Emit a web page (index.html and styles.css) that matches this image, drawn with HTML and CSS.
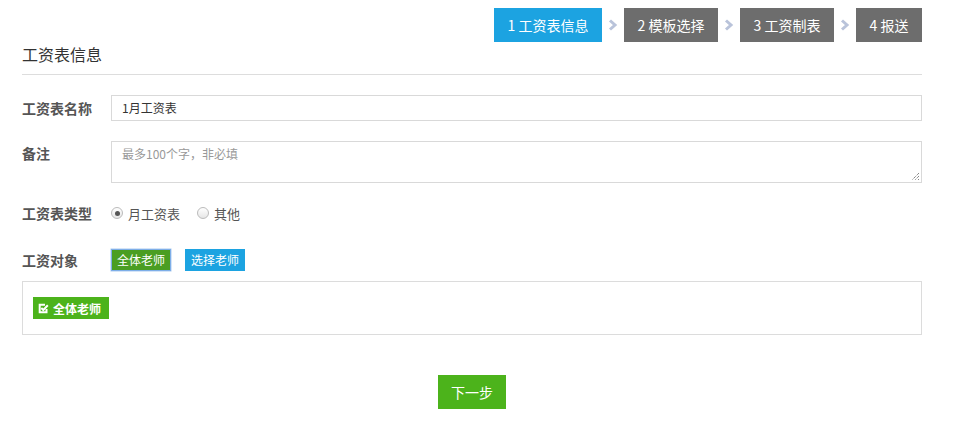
FILE: index.html
```html
<!DOCTYPE html>
<html lang="zh">
<head>
<meta charset="utf-8">
<link rel="stylesheet" href="styles.css">
</head>
<body>
<div class="page">
  <div class="steps">
    <div class="step active s1">1 工资表信息</div>
    <span class="sep"><svg width="10" height="12" viewBox="0 0 10 12"><path d="M2 1.5 L7 6 L2 10.5" fill="none" stroke="#b9c3da" stroke-width="3"/></svg></span>
    <div class="step s2">2 模板选择</div>
    <span class="sep"><svg width="10" height="12" viewBox="0 0 10 12"><path d="M2 1.5 L7 6 L2 10.5" fill="none" stroke="#b9c3da" stroke-width="3"/></svg></span>
    <div class="step s3">3 工资制表</div>
    <span class="sep"><svg width="10" height="12" viewBox="0 0 10 12"><path d="M2 1.5 L7 6 L2 10.5" fill="none" stroke="#b9c3da" stroke-width="3"/></svg></span>
    <div class="step s4">4 报送</div>
  </div>
  <h2 class="title">工资表信息</h2>
  <div class="row row-name">
    <label class="label">工资表名称</label>
    <div class="input">1月工资表</div>
  </div>
  <div class="row row-note">
    <label class="label label-top">备注</label>
    <div class="textarea"><span class="ph">最多100个字，非必填</span>
      <svg class="grip" width="9" height="9" viewBox="0 0 9 9"><path d="M8 1 L1 8 M8 4 L4 8 M8 7 L7 8" stroke="#555" stroke-width="1" stroke-dasharray="1 1"/></svg>
    </div>
  </div>
  <div class="row row-type">
    <label class="label">工资表类型</label>
    <div class="radios">
      <span class="radio checked"></span><span class="rtext">月工资表</span>
      <span class="radio"></span><span class="rtext">其他</span>
    </div>
  </div>
  <div class="row row-obj">
    <label class="label">工资对象</label>
    <div class="btns">
      <span class="btn btn-green">全体老师</span>
      <span class="btn btn-blue">选择老师</span>
    </div>
  </div>
  <div class="box">
    <span class="tag"><svg width="11" height="11" viewBox="0 0 11 11"><path d="M8.5 6 V9.3 H1.7 V1.7 H7" fill="none" stroke="#fff" stroke-width="2"/><path d="M3.3 5 L5.3 7 L9.8 2.2" fill="none" stroke="#fff" stroke-width="2"/></svg>全体老师</span>
  </div>
  <div class="actions">
    <span class="next">下一步</span>
  </div>
</div>
</body>
</html>
```

FILE: styles.css
```css
* { box-sizing: border-box; }
html, body { margin: 0; padding: 0; background: #fff; }
body {
  font-family: "Noto Sans CJK SC", "Liberation Sans", sans-serif;
  color: #333;
  overflow: hidden;
  height: 423px;
}
.page {
  width: 900px;
  margin-left: 22px;
  padding-top: 8px;
}
.steps {
  display: flex;
  justify-content: flex-end;
  align-items: center;
  height: 34px;
}
.step {
  height: 34px;
  line-height: 34px;
  text-align: center;
  background: #6d6d6d;
  color: #fff;
  font-size: 14px;
  white-space: nowrap;
}
.s1 { width: 108px; }
.s2, .s3 { width: 94px; }
.s4 { width: 66px; }
.step.active { background: #1ca3e1; }
.sep {
  width: 22px;
  display: flex;
  justify-content: center;
  align-items: center;
}
.title {
  margin: 0;
  padding: 2px 0 10px 0;
  font-size: 16px;
  line-height: 20px;
  font-weight: normal;
  color: #333;
  border-bottom: 1px solid #ddd;
}
.row {
  display: flex;
  align-items: center;
}
.label {
  width: 89px;
  flex: none;
  font-size: 14px;
  font-weight: bold;
  color: #555;
}
.label-top { align-self: flex-start; padding-top: 2px; }
.row-name { margin-top: 20px; }
.input {
  flex: 1;
  height: 26px;
  border: 1px solid #d9d9d9;
  padding-left: 10px;
  font-size: 12px;
  line-height: 24px;
  color: #333;
}
.row-note { margin-top: 20px; }
.textarea {
  flex: 1;
  height: 42px;
  border: 1px solid #d9d9d9;
  padding: 4px 10px;
  font-size: 12px;
  line-height: 16px;
  position: relative;
}
.ph { color: #999; }
.grip { position: absolute; right: 1px; bottom: 1px; }
.row-type { margin-top: 20px; height: 20px; }
.radios { display: flex; align-items: center; font-size: 13px; color: #555; }
.radio {
  width: 12px;
  height: 12px;
  border-radius: 50%;
  border: 1px solid #bbb;
  background: linear-gradient(#fff, #e6e6e6);
  position: relative;
  margin-right: 5px;
}
.radio.checked::after {
  content: "";
  position: absolute;
  left: 2.5px;
  top: 2.5px;
  width: 5px;
  height: 5px;
  border-radius: 50%;
  background: #555;
}
.rtext { margin-right: 17px; }
.row-obj { margin-top: 26px; }
.btns { display: flex; gap: 14px; }
.btn {
  height: 22px;
  width: 60px;
  line-height: 20px;
  text-align: center;
  font-size: 12px;
  color: #fff;
}
.btn-green { background: #4a9e22; border: 1px solid #7eaee8; box-shadow: 0 0 0 0.5px #a9c9ef; }
.btn-blue { background: #1ca3e1; border: 1px solid #1ca3e1; }
.box {
  margin-top: 10px;
  height: 54px;
  border: 1px solid #dcdcdc;
  padding: 15px 0 0 10px;
  display: flex;
  align-items: flex-start;
}
.tag {
  display: flex;
  align-items: center;
  gap: 4px;
  height: 22px;
  width: 76px;
  padding: 0 0 0 5px;
  background: #4cb31b;
  color: #fff;
  font-size: 12px;
  font-weight: bold;
}
.actions {
  display: flex;
  justify-content: center;
  margin-top: 40px;
}
.next {
  width: 68px;
  height: 34px;
  line-height: 34px;
  text-align: center;
  background: #4cb31b;
  color: #fff;
  font-size: 14px;
}
```
